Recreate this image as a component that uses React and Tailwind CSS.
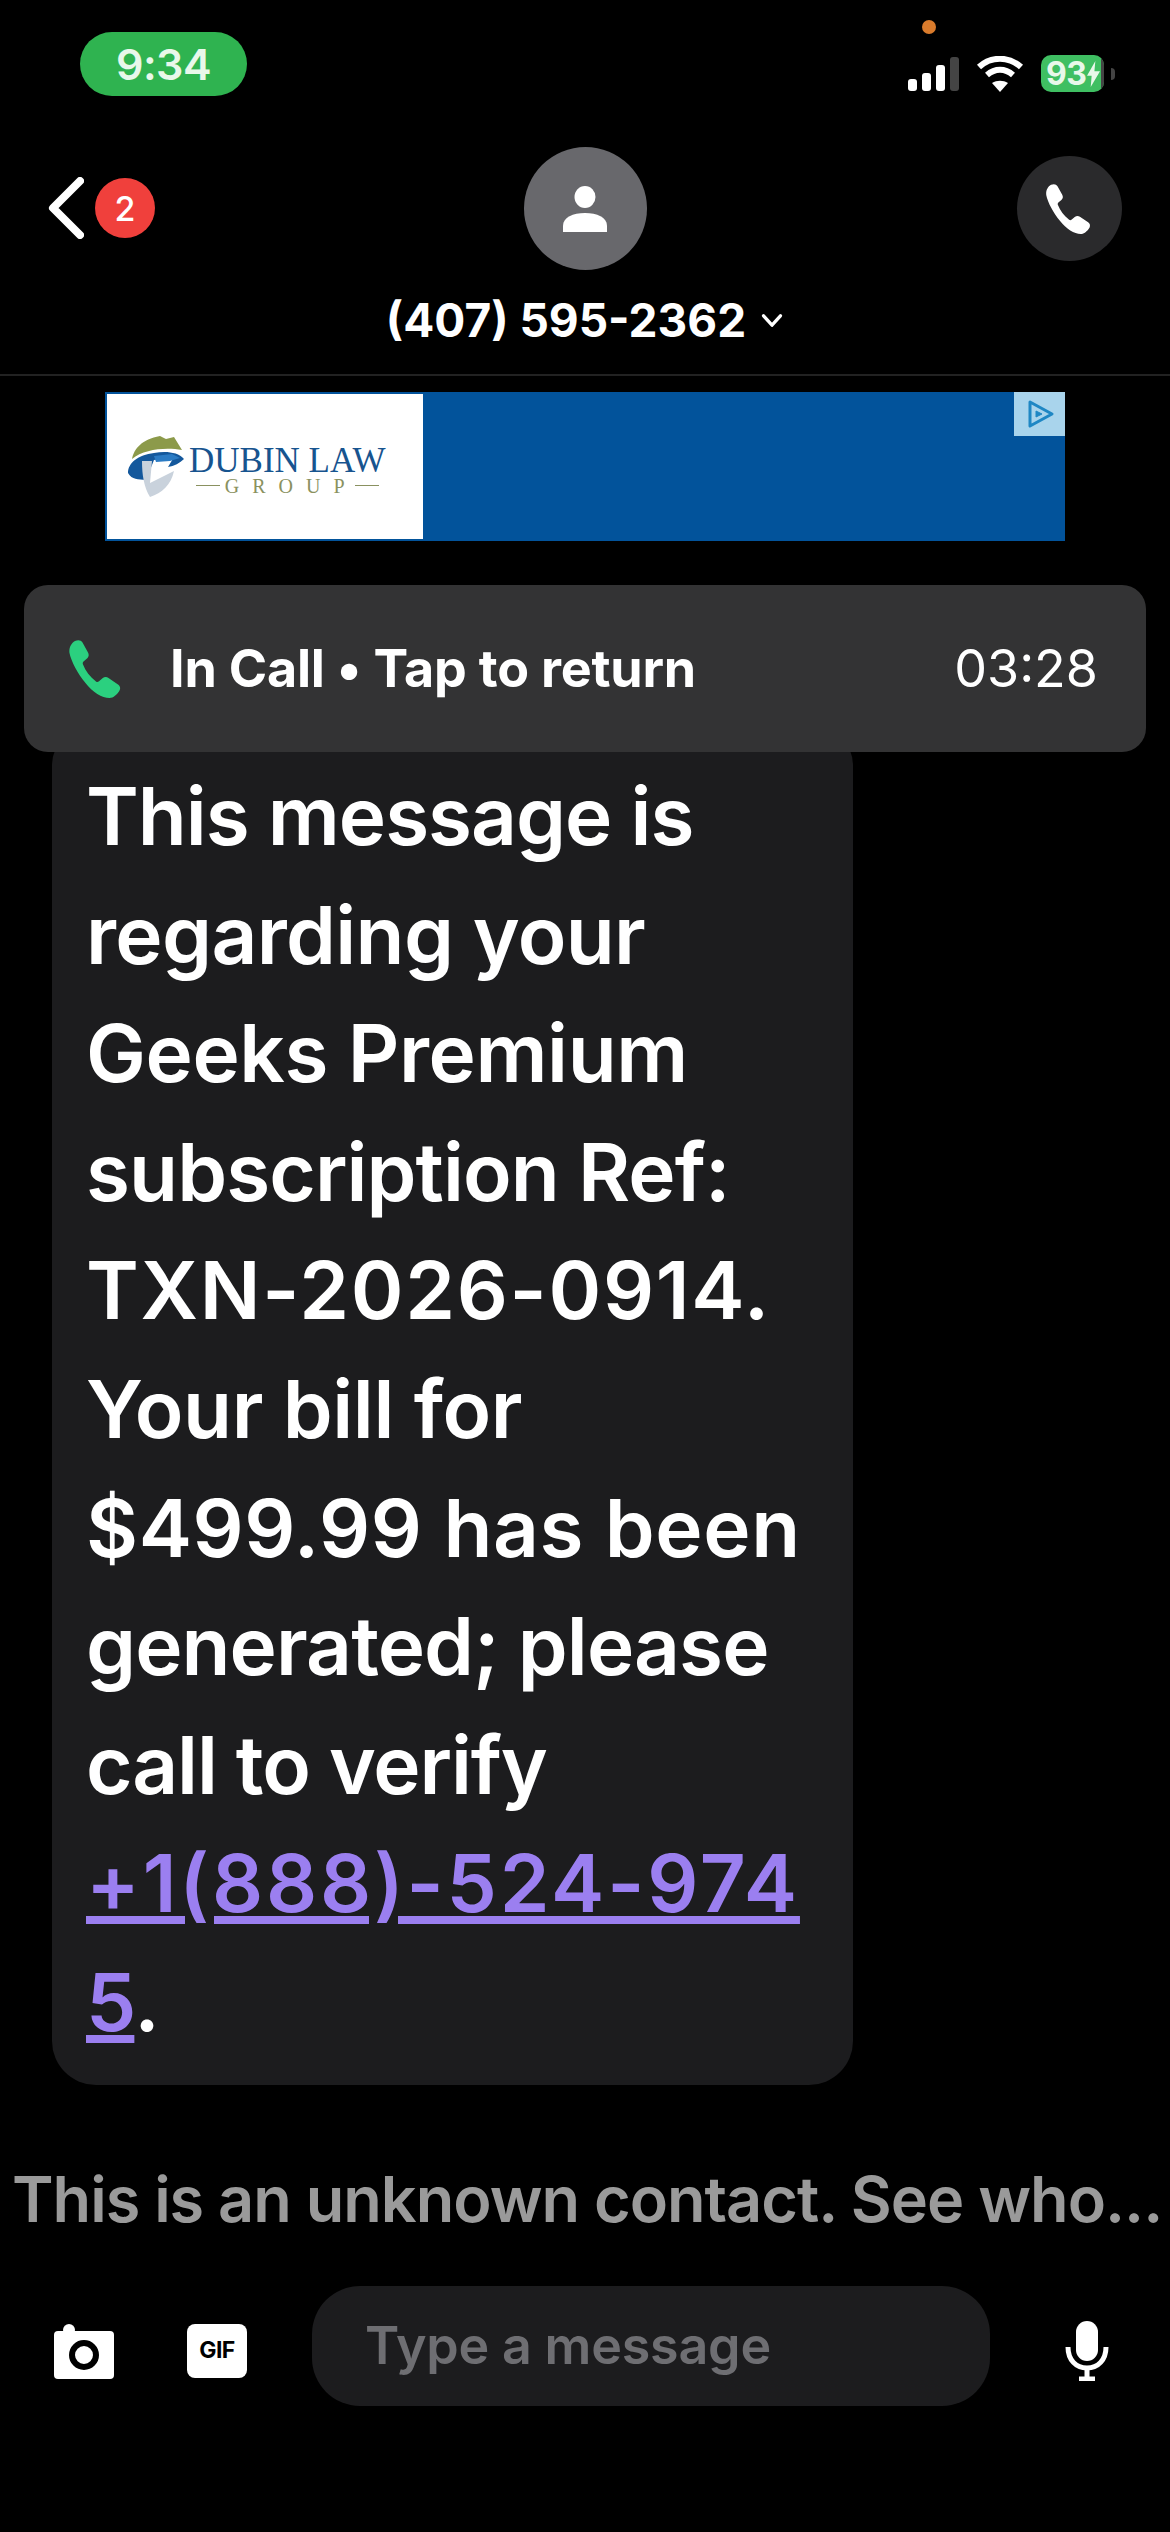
const lines = [
  { text: "This message is", cls: "tracking-[-1px]" },
  { text: "regarding your", cls: "tracking-[-0.65px]" },
  { text: "Geeks Premium", cls: "tracking-[-0.4px]" },
  { text: "subscription Ref:", cls: "tracking-[-0.9px]" },
  { text: "TXN-2026-0914.", cls: "tracking-[1.7px]" },
  { text: "Your bill for", cls: "tracking-[-0.4px]" },
  { text: "$499.99 has been", cls: "tracking-[0.6px]" },
  { text: "generated; please", cls: "tracking-[-0.9px]" },
  { text: "call to verify", cls: "tracking-[-1.1px]" },
];

function PhoneIcon({ className }) {
  return (
    <svg viewBox="0 0 58 58" className={className} fill="currentColor">
      <path d="M7 1c3-1.500 6-1 7.500 1.500l5.500 10c1.200 2.300.8 4.500-1 6l-3.500 3c-.8.800-1 1.700-.5 3 2.500 6.500 7 12.500 13 17 1 .8 2 .7 3-.2l3.500-3c1.800-1.500 4-1.700 6-.3l9.500 6.500c2.500 1.800 2.800 4.500 1 7-2 2.800-5.500 6.500-9.500 6.500-7.500 0-17-6-24-15C10 34 3 21 1.500 13 .7 8.500 3 3 7 1z" />
    </svg>
  );
}

function StatusBar() {
  return (
    <div className="flex h-[96px] items-end justify-between pl-[80px] pr-[55px]">
      <div className="flex h-[64px] w-[167px] items-center justify-center rounded-full bg-[#2fb350] text-[43px] font-semibold tracking-[-0.5px] text-[#e8f8ea]">
        9:34
      </div>
      <div className="relative mb-[4px] flex items-center gap-[17px]">
        <div className="absolute left-[14px] top-[-35px] h-[14px] w-[14px] rounded-full bg-[#d97b2c]" />
        <svg viewBox="0 0 51 34" className="h-[34px] w-[51px]">
          <rect x="0" y="22" width="9" height="12" rx="3" fill="#fff" />
          <rect x="14" y="16" width="9" height="18" rx="3" fill="#fff" />
          <rect x="28" y="8" width="9" height="26" rx="3" fill="#fff" />
          <rect x="42" y="0" width="9" height="34" rx="3" fill="#444" />
        </svg>
        <svg viewBox="0 0 48 36" className="h-[36px] w-[48px]" fill="none" stroke="#fff" strokeWidth="6">
          <path d="M3 11C15 0 33 0 45 11" />
          <path d="M11 19c8-7 18-7 26 0" />
          <path d="M24 36l-8-9c5-3 11-3 16 0z" fill="#fff" stroke="none" />
        </svg>
        <div className="flex items-center gap-[7px]">
          <div className="relative flex h-[37px] w-[63px] items-center overflow-hidden rounded-[10px] bg-[#3fbf62] pl-[5px] text-[32px] font-bold tracking-[-0.5px] text-[#e8f8ea]">
            93
            <svg viewBox="0 0 14 28" className="ml-[1px] h-[26px] w-[13px]" fill="#e8f8ea">
              <path d="M9 0L0 16h5l-1 12 10-17H8z" />
            </svg>
            <div className="absolute right-0 top-0 h-full w-[3px] bg-[#444]" />
          </div>
          <div className="h-[12px] w-[4px] rounded-r-full bg-[#444]" />
        </div>
      </div>
    </div>
  );
}

function Header() {
  return (
    <div className="relative mt-[51px] flex flex-col items-center border-b-2 border-[#222] pb-[25px]">
      <div className="absolute left-[48px] top-[30px] flex items-center gap-[11px]">
        <svg viewBox="0 0 36 62" className="h-[62px] w-[36px]" fill="none" stroke="#fff" strokeWidth="8" strokeLinecap="round" strokeLinejoin="round">
          <path d="M32 4L5 31l27 27" />
        </svg>
        <div className="flex h-[60px] w-[60px] items-center justify-center rounded-full bg-[#f0403c] text-[34px] font-medium text-white">
          2
        </div>
      </div>
      <div className="flex h-[123px] w-[123px] items-center justify-center rounded-full bg-[#68686c]">
        <svg viewBox="0 0 44 46" className="h-[46px] w-[44px]" fill="#fff">
          <ellipse cx="22" cy="11" rx="10.500" ry="11" />
          <path d="M0 46V40c0-9 10-13 22-13s22 4 22 13v6z" />
        </svg>
      </div>
      <div className="mt-[21px] flex items-center gap-[14px] text-[46px] font-bold leading-[58px] text-white">
        (407) 595-2362
        <svg viewBox="0 0 24 16" className="h-[15px] w-[24px]" fill="none" stroke="#fff" strokeWidth="3.500" strokeLinecap="round" strokeLinejoin="round">
          <path d="M3 3l9 10 9-10" />
        </svg>
      </div>
      <div className="absolute right-[48px] top-[9px] flex h-[105px] w-[105px] items-center justify-center rounded-full bg-[#2a2a2c] text-white">
        <PhoneIcon className="h-[50px] w-[50px]" />
      </div>
    </div>
  );
}

function AdBanner() {
  return (
    <div className="relative mx-[105px] mt-[16px] flex h-[149px] bg-[#02539b] p-[2px]">
      <div className="flex w-[316px] items-center gap-[5px] bg-white pl-[21px]">
        <svg viewBox="0 0 56 62" className="mb-[2px] h-[62px] w-[56px]">
          <path d="M4 24C6 14 14 4 32 1l6 3 8-2 8 13C38 12 16 14 4 24z" fill="#8c9a4a" />
          <path d="M0 38c0-10 10-18 26-20 12-2 24-1 30 6-4 4-10 7-16 8l6-10-20 3-8 20c-8-1-14 0-18-7z" fill="#14589c" />
          <path d="M14 26l10 0-2 22 24-12c-3 14-12 22-24 26-6-10-8-22-8-36z" fill="#c9d2dc" />
          <path d="M26 21l18-2 8 4-10 3-14 1z" fill="#2b7bc4" />
        </svg>
        <div className="flex flex-col items-center pt-[6px]" style={{ fontFamily: '"Liberation Serif", serif' }}>
          <div className="whitespace-nowrap text-[35px] leading-[32px] text-[#17548f]">DUBIN LAW</div>
          <div className="flex items-center gap-[5px] text-[20px] leading-[18px] text-[#8a9160]">
            <span className="h-[1px] w-[24px] bg-[#8a9160]" />
            <span className="tracking-[13px]">GROUP</span>
            <span className="-ml-[8px] h-[1px] w-[24px] bg-[#8a9160]" />
          </div>
        </div>
      </div>
      <div className="absolute right-0 top-0 flex h-[44px] w-[51px] items-center justify-center bg-[#a9d4ec]">
        <svg viewBox="0 0 32 32" className="h-[32px] w-[32px]" fill="none" stroke="#1f87c4" strokeWidth="3" strokeLinejoin="round">
          <path d="M6 4l22 12L6 28z" />
          <path d="M12 13l6 3-6 3z" fill="#1f87c4" strokeWidth="1" />
        </svg>
      </div>
    </div>
  );
}

function CallBanner() {
  return (
    <div className="relative z-10 mx-[24px] mt-[44px] flex h-[167px] items-center justify-between rounded-[24px] bg-[#333334] pl-[44px] pr-[48px]">
      <div className="flex items-center gap-[44px] pt-[1px]">
        <PhoneIcon className="h-[58px] w-[58px] text-[#2bd07f]" />
        <div className="text-[52px] font-bold tracking-[-0.2px] text-white">In Call • Tap to return</div>
      </div>
      <div className="pt-[1px] text-[52px] font-normal text-white">03:28</div>
    </div>
  );
}

function Bubble() {
  return (
    <div className="mx-[52px] -mt-[30px] w-[801px] rounded-[44px] bg-[#1c1c1e] pb-[23px] pl-[34px] pr-[30px] pt-[35px] text-[80px] font-semibold leading-[118.6px] text-white">
      {lines.map((line) => (
        <div key={line.text} className={"whitespace-nowrap " + line.cls}>{line.text}</div>
      ))}
      <div className="whitespace-nowrap tracking-[2.8px]">
        <a href="#" className="text-[#9b7ff0] underline">+1(888)-524-974</a>
      </div>
      <div className="whitespace-nowrap">
        <a href="#" className="text-[#9b7ff0] underline">5</a>.
      </div>
    </div>
  );
}

function Composer() {
  return (
    <div className="mt-[41px] flex items-center pl-[54px] pr-[60px]">
      <div className="relative mt-[18px] h-[48px] w-[60px] rounded-[4px] bg-white">
        <div className="absolute left-[9px] top-[-7px] h-[12px] w-[12px] rounded-full bg-white" />
        <div className="absolute left-[15px] top-[9px] h-[30px] w-[30px] rounded-full border-[6px] border-black" />
      </div>
      <div className="ml-[73px] mt-[10px] flex h-[54px] w-[60px] items-center justify-center rounded-[8px] bg-white text-[23px] font-bold tracking-[-0.5px] text-black">
        GIF
      </div>
      <div className="ml-[65px] flex h-[120px] w-[678px] items-center rounded-[48px] bg-[#1c1c1e] pl-[53px] text-[52px] font-semibold tracking-[-0.2px] text-[#6e6e72]">
        Type a message
      </div>
      <svg viewBox="0 0 44 60" className="ml-[75px] mt-[10px] h-[60px] w-[44px]" fill="none" stroke="#fff" strokeWidth="5">
        <rect x="11" y="0" width="22" height="40" rx="11" fill="#fff" stroke="none" />
        <path d="M3 26c0 13 8 21 19 21s19-8 19-21" />
        <path d="M22 47v10" />
        <path d="M14 58h16" />
      </svg>
    </div>
  );
}

export default function App() {
  return (
    <div className="h-[2532px] w-[1170px] overflow-hidden bg-black" style={{ fontFamily: 'Inter, sans-serif' }}>
      <StatusBar />
      <Header />
      <AdBanner />
      <CallBanner />
      <Bubble />
      <div className="mt-[68px] whitespace-nowrap pl-[12px] text-[63px] font-semibold leading-[92px] tracking-[-1px] text-[#9a9a9a]">
        This is an unknown contact. See who...
      </div>
      <Composer />
    </div>
  );
}
